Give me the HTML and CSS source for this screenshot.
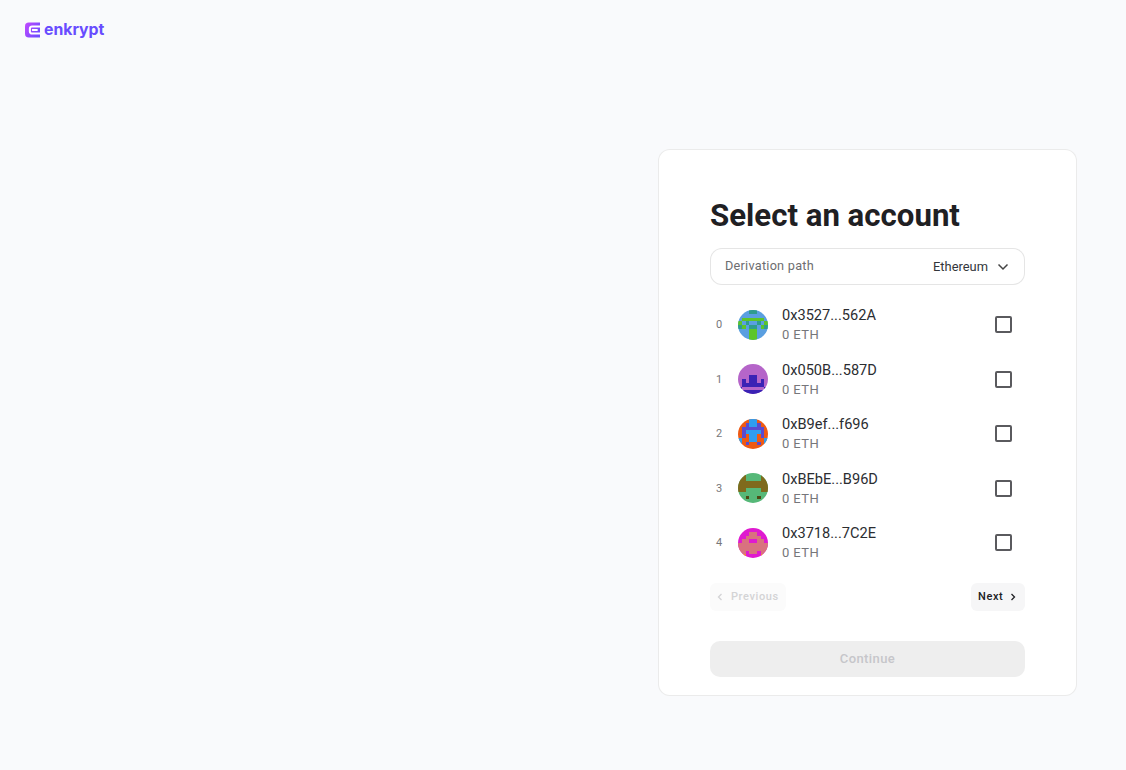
FILE: index.html
```html
<!DOCTYPE html>
<html lang="en">
<head>
  <meta charset="UTF-8" />
  <meta name="viewport" content="width=device-width, initial-scale=1" />
  <title>Enkrypt - Select an account</title>
  <link rel="stylesheet" href="styles.css">
</head>
<body>
  <header class="top">
    <a class="logo" href="#">
      <svg class="logo-mark" viewBox="0 0 16 16" aria-hidden="true">
        <defs>
          <linearGradient id="logoGrad" x1="0" y1="0" x2="1" y2="0.6">
            <stop offset="0" stop-color="#c549ff"/>
            <stop offset="1" stop-color="#704cff"/>
          </linearGradient>
        </defs>
        <path d="M4 0h12v16H4a4 4 0 0 1-4-4V4a4 4 0 0 1 4-4z" fill="url(#logoGrad)"/>
        <path d="M16 4.2H7.5a2.3 2.3 0 0 0-2.3 2.3v3a2.3 2.3 0 0 0 2.3 2.3H16M7.5 8H13.5" fill="none" stroke="#fff" stroke-width="2.2"/>
      </svg>
      <span>enkrypt</span>
    </a>
  </header>

  <main class="page">
    <section class="card">
      <h1>Select an account</h1>

      <button class="path-select" type="button">
        <span class="path-label">Derivation path</span>
        <span class="path-value">Ethereum
          <svg class="chev" viewBox="0 0 12 8" aria-hidden="true"><path d="M1.5 1.5 6 6l4.5-4.5"/></svg>
        </span>
      </button>

      <ul class="accounts">
        <li class="account">
          <span class="idx">0</span>
          <svg class="blockie" viewBox="0 0 8 8" shape-rendering="crispEdges" aria-hidden="true">
            <rect width="8" height="8" fill="#5a9fe0"/>
            <path fill="#2f9c8e" d="M3 0h2v1H3zM2 3h1v1H2zM5 3h1v1H5zM3 4h2v1H3zM0 4h1v1H0zM7 4h1v1H7z"/>
            <path fill="#5cc52a" d="M1 2h6v1H1zM0 3h1v1H0zM7 3h1v1H7zM1 4h1v1H1zM6 4h1v1H6zM3 5h2v3H3z"/>
          </svg>
          <span class="info"><span class="addr">0x3527...562A</span><span class="bal">0 ETH</span></span>
          <input class="check" type="checkbox" aria-label="Select account 0" />
        </li>
        <li class="account">
          <span class="idx">1</span>
          <svg class="blockie" viewBox="0 0 8 8" shape-rendering="crispEdges" aria-hidden="true">
            <rect width="8" height="8" fill="#b565c9"/>
            <path fill="#3a22b5" d="M3 3h2v1H3zM1 4h1v1H1zM3 4h2v1H3zM6 4h1v1H6zM1 5h6v1H1zM0 6h1v1H0zM7 6h1v1H7zM1 7h6v1H1z"/>
          </svg>
          <span class="info"><span class="addr">0x050B...587D</span><span class="bal">0 ETH</span></span>
          <input class="check" type="checkbox" aria-label="Select account 1" />
        </li>
        <li class="account">
          <span class="idx">2</span>
          <svg class="blockie" viewBox="0 0 8 8" shape-rendering="crispEdges" aria-hidden="true">
            <rect width="8" height="8" fill="#ee5a14"/>
            <path fill="#2f9df0" d="M3 0h2v2H3zM2 3h4v1H2zM3 4h2v2H3zM0 5h1v3H0zM7 5h1v3H7z"/>
            <path fill="#5a4bd0" d="M2 1h1v1H2zM5 1h1v1H5zM1 2h6v1H1zM1 3h1v2H1zM6 3h1v2H6zM2 6h1v1H2zM5 6h1v1H5z"/>
          </svg>
          <span class="info"><span class="addr">0xB9ef...f696</span><span class="bal">0 ETH</span></span>
          <input class="check" type="checkbox" aria-label="Select account 2" />
        </li>
        <li class="account">
          <span class="idx">3</span>
          <svg class="blockie" viewBox="0 0 8 8" shape-rendering="crispEdges" aria-hidden="true">
            <rect width="8" height="8" fill="#56b878"/>
            <path fill="#7f6a1c" d="M0 0h2v2H0zM6 0h2v2H6zM0 2h8v2H0zM0 4h2v1H0zM6 4h2v1H6z"/>
            <path fill="#4f4a14" d="M2 6h1v1H2zM5 6h1v1H5z"/>
          </svg>
          <span class="info"><span class="addr">0xBEbE...B96D</span><span class="bal">0 ETH</span></span>
          <input class="check" type="checkbox" aria-label="Select account 3" />
        </li>
        <li class="account">
          <span class="idx">4</span>
          <svg class="blockie" viewBox="0 0 8 8" shape-rendering="crispEdges" aria-hidden="true">
            <rect width="8" height="8" fill="#df1ad0"/>
            <path fill="#d9727f" d="M3 1h2v1H3zM2 2h4v1H2zM1 3h2v1H1zM5 3h2v1H5zM0 4h8v2H0zM0 6h2v1H0zM6 6h2v1H6zM3 6h2v1H3z"/>
            <path fill="#f08a3c" d="M0 7h2v1H0zM6 7h2v1H6z"/>
          </svg>
          <span class="info"><span class="addr">0x3718...7C2E</span><span class="bal">0 ETH</span></span>
          <input class="check" type="checkbox" aria-label="Select account 4" />
        </li>
      </ul>

      <div class="pager">
        <button class="page-btn prev" type="button" disabled>
          <svg viewBox="0 0 8 10" aria-hidden="true"><path d="M5.5 2 2.5 5l3 3"/></svg>
          Previous
        </button>
        <button class="page-btn next" type="button">
          Next
          <svg viewBox="0 0 8 10" aria-hidden="true"><path d="M2.5 2l3 3-3 3"/></svg>
        </button>
      </div>

      <button class="continue" type="button" disabled>Continue</button>
    </section>
  </main>
</body>
</html>
```

FILE: styles.css
```css
* {
  box-sizing: border-box;
}
html, body {
  height: 100%;
}
body {
  margin: 0;
  font-family: Roboto, "Liberation Sans", sans-serif;
  background: #f9fafc;
  color: #202124;
  overflow: hidden;
}
.top {
  height: 149px;
  padding: 21px 25px 0;
}
.logo {
  display: inline-flex;
  align-items: center;
  gap: 4px;
  color: #684cff;
  text-decoration: none;
  font-family: Inter, Roboto, sans-serif;
  font-weight: 700;
  font-size: 15.8px;
  line-height: 17px;
}
.logo-mark {
  width: 15px;
  height: 16px;
}
.page {
  display: flex;
  justify-content: flex-end;
  padding-right: 49px;
}
.card {
  width: 419px;
  height: 547px;
  background: #fff;
  border: 1px solid rgba(0, 0, 0, 0.08);
  border-radius: 12px;
  padding: 47px 51px 18px;
}
h1 {
  margin: 0 0 13px;
  font-size: 31.2px;
  line-height: 38px;
  font-weight: 700;
  color: #1f2023;
}
.path-select {
  width: 100%;
  height: 37px;
  display: flex;
  justify-content: space-between;
  align-items: center;
  padding: 0 15px 0 14px;
  background: #fff;
  border: 1px solid rgba(0, 0, 0, 0.1);
  border-radius: 12px;
  font-family: inherit;
}
.path-label {
  padding-bottom: 2px;
  font-size: 12.7px;
  letter-spacing: 0.25px;
  color: #6d6d70;
}
.path-value {
  display: flex;
  align-items: center;
  gap: 9px;
  font-size: 12.9px;
  color: #33363b;
}
.chev {
  width: 12px;
  height: 8px;
  fill: none;
  stroke: #444;
  stroke-width: 1.5;
}
.accounts {
  list-style: none;
  margin: 12.5px 0 0;
  padding: 0;
}
.account {
  height: 54.5px;
  display: flex;
  align-items: center;
}
.idx {
  width: 28px;
  padding-left: 6px;
  font-size: 11px;
  color: #77777a;
}
.blockie {
  width: 30px;
  height: 30px;
  border-radius: 50%;
  flex-shrink: 0;
}
.info {
  display: flex;
  flex-direction: column;
  margin-left: 14px;
  padding-top: 1px;
  flex: 1;
}
.addr {
  font-size: 14.6px;
  line-height: 20px;
  color: #2b2d31;
}
.bal {
  font-size: 13px;
  line-height: 20px;
  letter-spacing: 0.4px;
  color: #76767a;
}
.check {
  appearance: none;
  width: 17px;
  height: 17px;
  margin: 0 13px 0 0;
  border: 2px solid #5a5a5e;
  border-radius: 2px;
  background: #fff;
}
.pager {
  display: flex;
  justify-content: space-between;
  margin-top: 12.5px;
}
.page-btn {
  height: 28px;
  display: flex;
  align-items: center;
  gap: 5px;
  border: 0;
  border-radius: 6px;
  background: #f6f6f7;
  font-family: inherit;
  font-size: 11px;
  font-weight: 500;
  letter-spacing: 0.6px;
  color: #202124;
}
.page-btn svg {
  width: 8px;
  height: 10px;
  fill: none;
  stroke: currentColor;
  stroke-width: 1.3;
}
.prev {
  width: 76px;
  padding: 0 0 0 6px;
  gap: 7px;
  background: #fbfbfb;
  color: #d3d3d5;
}
.next {
  width: 54px;
  padding: 0 0 0 7px;
  gap: 6px;
}
.continue {
  display: block;
  width: 100%;
  height: 36px;
  margin-top: 30px;
  border: 0;
  border-radius: 10px;
  background: #eeeeee;
  font-family: inherit;
  font-size: 13px;
  font-weight: 500;
  letter-spacing: 0.4px;
  color: #c6c6ca;
}
```
